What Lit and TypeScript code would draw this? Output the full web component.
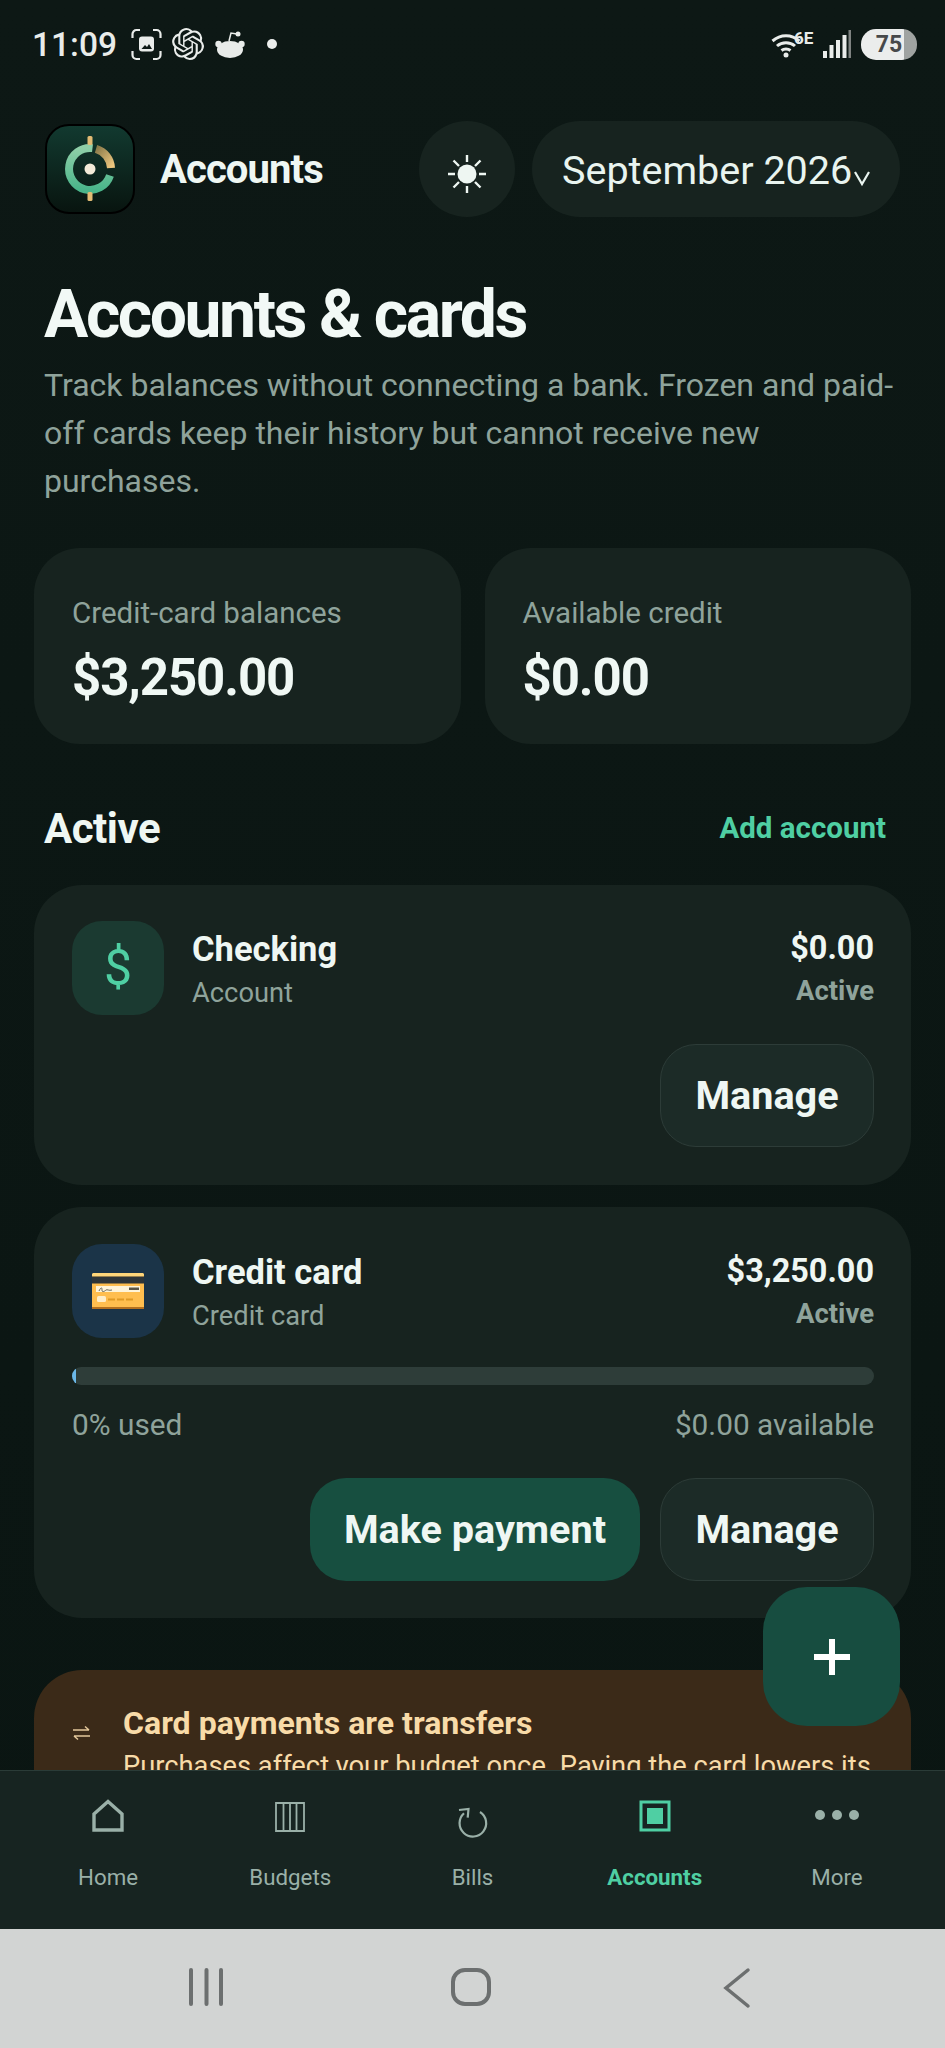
import { LitElement, html, css, svg } from 'lit';
import { customElement } from 'lit/decorators.js';

const sunIcon = svg`<circle cx="20" cy="20" r="9.5" fill="#eef6f2"/>
	<g stroke="#eef6f2" stroke-width="2.4" stroke-linecap="butt">
		<path d="M20 1v7M20 32v7M1 20h7M32 20h7M6.5 6.5l5.5 5.5M28 28l5.5 5.5M33.5 6.5L28 12M12 28l-5.5 5.5"/>
	</g>`;

const logo = svg`<defs>
		<linearGradient id="lg" x1="0" y1="0" x2="0" y2="1">
			<stop offset="0" stop-color="#123a30"/><stop offset="1" stop-color="#08140f"/>
		</linearGradient>
		<linearGradient id="ring" x1="0" y1="0" x2="0" y2="1">
			<stop offset="0" stop-color="#8fcfa8"/><stop offset="1" stop-color="#49b58a"/>
		</linearGradient>
		<linearGradient id="gold" x1="0" y1="0" x2="1" y2="1">
			<stop offset="0" stop-color="#8a7a4a"/><stop offset="1" stop-color="#eec77f"/>
		</linearGradient>
	</defs>
	<rect x="1" y="1" width="88" height="88" rx="23" fill="url(#lg)" stroke="#000" stroke-width="2"/>
	<path d="M47.500 24.100A21 21 0 1 0 65 51.500" fill="none" stroke="url(#ring)" stroke-width="8"/>
	<path d="M51 24.900A21 21 0 0 1 66 44" fill="none" stroke="url(#gold)" stroke-width="8"/>
	<rect x="42.500" y="12" width="5" height="9" rx="1.500" fill="#e2bb74"/>
	<rect x="42.500" y="68" width="5" height="9" rx="1.500" fill="#e2bb74"/>
	<circle cx="45" cy="45" r="5.500" fill="#f3ead8"/>`;

const cardIcon = svg`<rect x="0" y="0" width="52" height="36" rx="2.500" fill="#ffbe4f"/>
	<rect x="0" y="0" width="52" height="3.500" rx="1.500" fill="#ffd67a"/>
	<rect x="0" y="3.500" width="52" height="7" fill="#2e3538"/>
	<rect x="4" y="13" width="44" height="6" fill="#fff4d8"/>
	<path d="M7 18c2-4 3-4 3-1s3 1 4 0 3 1 6 0" fill="none" stroke="#4a4a40" stroke-width="0.800"/>
	<rect x="37" y="14.500" width="10" height="2.500" fill="#5b5647"/>
	<rect x="5" y="23" width="9" height="6" rx="1.500" fill="#ffeec9"/>
	<path d="M16 26.500h7M25 26.500h7M34 26.500h7" stroke="#e09a25" stroke-width="2"/>
	<rect x="0" y="34" width="52" height="2" fill="#b4701f"/>`;

type Tab = { label: string; icon: unknown; active?: boolean };

const tabs: Tab[] = [
	{ label: 'Home', icon: svg`<path d="M16 2.500L30 15v16H2V15z" fill="none" stroke="currentColor" stroke-width="3.400"/>` },
	{ label: 'Budgets', icon: svg`<path d="M2 4h28v28H2zM9.500 4v28M16 4v28M22.500 4v28" fill="none" stroke="currentColor" stroke-width="1.800"/>` },
	{ label: 'Bills', icon: svg`<path d="M24 13A13.300 13.300 0 1 1 8 14.300" fill="none" stroke="currentColor" stroke-width="2.200"/><path d="M3 11l9.500-1 -.8 8.700" fill="none" stroke="currentColor" stroke-width="2.200"/>` },
	{ label: 'Accounts', active: true, icon: svg`<path d="M2 3h28v28H2z" fill="none" stroke="currentColor" stroke-width="3"/><rect x="8" y="9" width="16" height="16" fill="currentColor"/>` },
	{ label: 'More', icon: svg`<circle cx="-1" cy="16" r="5" fill="currentColor"/><circle cx="16" cy="16" r="5" fill="currentColor"/><circle cx="33" cy="16" r="5" fill="currentColor"/>` },
];

@customElement('app-root')
export class AppRoot extends LitElement {
	static styles = css`
		:host {
			display: flex;
			flex-direction: column;
			width: 945px;
			height: 2048px;
			overflow: hidden;
			background: linear-gradient(#0d1815, #0a1512);
			color: #eff7f3;
			font-family: Roboto, 'Noto Sans', sans-serif;
		}
		svg { display: block; overflow: visible; }

		/* status bar */
		.status {
			height: 68px;
			flex: none;
			display: flex;
			align-items: center;
			padding: 20px 28px 0 32px;
			box-sizing: border-box;
		}
		.time { font-size: 33.500px; font-weight: 500; color: #e9ecea; width: 99px; }
		.status-icons { display: flex; align-items: center; gap: 10px; }
		.dot { width: 10px; height: 10px; border-radius: 50%; background: #eceeed; margin-left: 21px; }
		.status-right { margin-left: auto; display: flex; align-items: center; }
		.sixe { font-size: 17px; font-weight: 700; color: #e9ecea; margin: -13px 6px 0 -7px; width: 21px; }
		.signal { margin-left: 1px; }
		.battery {
			width: 56px;
			height: 31px;
			margin-left: 9px;
			border-radius: 15px;
			overflow: hidden;
			background: linear-gradient(90deg, #ebedec 76%, #9fa3a1 76%);
			color: #47494a;
			font-size: 23px;
			font-weight: 700;
			line-height: 31px;
			text-align: center;
		}

		/* scrolling page */
		.page { flex: 1; min-height: 0; overflow: hidden; position: relative; }
		.top {
			display: flex;
			align-items: center;
			margin-top: 53px;
			padding: 0 45px;
		}
		.brand { font-size: 40px; font-weight: 700; letter-spacing: -0.900px; margin-left: 25px; }
		.theme {
			width: 96px;
			height: 96px;
			border-radius: 50%;
			background: #17231f;
			margin-left: auto;
			display: flex;
			align-items: center;
			justify-content: center;
		}
		.theme svg { margin-top: 10px; }
		.month {
			width: 368px;
			height: 96px;
			box-sizing: border-box;
			margin-left: 17px;
			padding: 3px 0 0 30px;
			border-radius: 48px;
			background: #17231f;
			display: flex;
			align-items: center;
			font-size: 39.500px;
			color: #e9f4ef;
		}
		.month svg { margin: 14px 0 0 2px; }
		h1 {
			margin: 60px 0 0;
			padding-left: 44px;
			font-size: 66px;
			line-height: 76px;
			font-weight: 700;
			letter-spacing: -2.450px;
			color: #f2f9f6;
		}
		.lede {
			margin: 8px 0 0;
			padding: 0 44px;
			font-size: 32px;
			line-height: 48px;
			color: #8fa39b;
		}
		.stats {
			display: grid;
			grid-template-columns: 1fr 1fr;
			gap: 24px;
			margin: 43px 34px 0;
		}
		.stat {
			height: 196px;
			box-sizing: border-box;
			padding: 47px 38px 0;
			border-radius: 46px;
			background: #17231f;
		}
		.stat-label { font-size: 29.500px; line-height: 36px; color: #8fa39b; }
		.stat-value { font-size: 51px; line-height: 58px; font-weight: 700; letter-spacing: -1.100px; margin-top: 18px; color: #f0f8f4; }
		.section {
			display: flex;
			justify-content: space-between;
			align-items: center;
			height: 48px;
			margin-top: 60px;
			padding: 0 59px 0 44px;
		}
		.section h2 { margin: 0; font-size: 42px; font-weight: 700; letter-spacing: -0.500px; }
		.add { font-size: 29.500px; font-weight: 700; color: #4fcfa3; }

		/* account cards */
		.cards { display: flex; flex-direction: column; gap: 22px; margin: 33px 34px 0; }
		.card { padding: 36px 37px 38px 38px; border-radius: 48px; background: #17231f; }
		.card.wide { padding: 37px 37px 37px 38px; }
		.row { display: flex; align-items: flex-start; }
		.badge {
			width: 92px;
			height: 94px;
			flex: none;
			border-radius: 30px;
			display: flex;
			align-items: center;
			justify-content: center;
		}
		.badge.green { background: #1b3a31; color: #4fcfa3; font-size: 50px; }
		.badge.blue { background: #1b3448; }
		.names { margin-left: 28px; flex: 1; }
		.name { font-size: 34.500px; line-height: 42px; font-weight: 700; margin-top: 7px; color: #eff7f3; }
		.sub { font-size: 27.300px; line-height: 38px; margin-top: 4px; color: #8fa39b; }
		.amounts { text-align: right; }
		.amount { font-size: 32.400px; line-height: 40px; font-weight: 700; margin-top: 7px; color: #eff7f3; }
		.state { font-size: 27.500px; line-height: 36px; font-weight: 700; margin-top: 5px; color: #8fa39b; }
		.track { height: 18px; margin-top: 29px; border-radius: 9px; background: #2e3d39; overflow: hidden; }
		.fill { height: 100%; width: 4px; background: #6bb8e8; }
		.usage {
			display: flex;
			justify-content: space-between;
			margin-top: 21px;
			font-size: 29.800px;
			line-height: 38px;
			color: #8fa39b;
		}
		.actions { display: flex; justify-content: flex-end; gap: 20px; margin-top: 29px; }
		.usage + .actions { margin-top: 34px; }
		.btn {
			height: 103px;
			box-sizing: border-box;
			border-radius: 36px;
			display: flex;
			align-items: center;
			justify-content: center;
			font-size: 39.600px;
			font-weight: 700;
			color: #eff7f3;
		}
		.btn.ghost { width: 214px; background: #1c2b27; border: 1px solid #2d3c38; }
		.btn.solid { width: 330px; background: #174f40; }

		/* note, cut off by the tab bar */
		.note {
			display: flex;
			margin: 52px 34px 0;
			padding: 32px 38px 32px 39px;
			border-radius: 48px 48px 0 0;
			background: #3b2a18;
			color: #f8dba8;
		}
		.note-icon { flex: none; width: 50px; margin-top: 24px; }
		.note-title { font-size: 32.100px; line-height: 42px; font-weight: 700; }
		.note-text { font-size: 27.300px; line-height: 40px; margin-top: 2px; }

		.fab {
			position: absolute;
			left: 763px;
			top: 1519px;
			width: 137px;
			height: 139px;
			border-radius: 44px;
			background: #174d40;
			display: flex;
			align-items: center;
			justify-content: center;
		}

		/* tab bar */
		.tabs {
			flex: none;
			height: 159px;
			box-sizing: border-box;
			padding: 0 17px;
			display: grid;
			grid-template-columns: repeat(5, 1fr);
			background: #172421;
			border-top: 1px solid #2a3b37;
		}
		.tab {
			display: flex;
			flex-direction: column;
			align-items: center;
			padding-top: 28px;
			color: #9ab0a8;
			font-size: 22.300px;
		}
		.tab.active { color: #4fcfa3; font-weight: 700; }
		.tab span { margin-top: 29px; line-height: 30px; }

		/* system navigation */
		.sys {
			flex: none;
			height: 119px;
			background: #d2d4d3;
			display: flex;
			align-items: flex-start;
			padding: 39px 0 0 188px;
			box-sizing: border-box;
		}
		.sys .home { margin: 0 233px 0 227px; }
	`;

	render() {
		return html`
			<div class="status">
				<div class="time">11:09</div>
				<div class="status-icons">
					<svg width="31" height="31" viewBox="0 0 31 31">
						<path d="M1.500 9V5a4 4 0 0 1 4-4H9M22 1h3.500a4 4 0 0 1 4 4v4M29.500 22v4a4 4 0 0 1-4 4H22M9 30H5.500a4 4 0 0 1-4-4v-4" fill="none" stroke="#e9ecea" stroke-width="2.200"/>
						<rect x="8" y="7.500" width="15" height="15" rx="3" fill="#e9ecea"/>
						<path d="M10.500 20l3.500-4 2 2 2-3 3 5z" fill="#0d1815"/>
					</svg>
					<svg width="32" height="32" viewBox="0 0 24 24">
						<path fill="#e9ecea" d="M22.2819 9.8211a5.9847 5.9847 0 0 0-.5157-4.9108 6.0462 6.0462 0 0 0-6.5098-2.9A6.0651 6.0651 0 0 0 4.9807 4.1818a5.9847 5.9847 0 0 0-3.9977 2.9 6.0462 6.0462 0 0 0 .7427 7.0966 5.98 5.98 0 0 0 .511 4.9107 6.051 6.051 0 0 0 6.5146 2.9001A5.9847 5.9847 0 0 0 13.2599 24a6.0557 6.0557 0 0 0 5.7718-4.2058 5.9894 5.9894 0 0 0 3.9977-2.9001 6.0557 6.0557 0 0 0-.7475-7.0729zm-9.022 12.6081a4.4755 4.4755 0 0 1-2.8764-1.0408l.1419-.0804 4.7783-2.7582a.7948.7948 0 0 0 .3927-.6813v-6.7369l2.02 1.1686a.071.071 0 0 1 .038.052v5.5826a4.504 4.504 0 0 1-4.4945 4.4944zm-9.6607-4.1254a4.4708 4.4708 0 0 1-.5346-3.0137l.142.0852 4.783 2.7582a.7712.7712 0 0 0 .7806 0l5.8428-3.3685v2.3324a.0804.0804 0 0 1-.0332.0615L9.74 19.9502a4.4992 4.4992 0 0 1-6.1408-1.6464zM2.3408 7.8956a4.485 4.485 0 0 1 2.3655-1.9728V11.6a.7664.7664 0 0 0 .3879.6765l5.8144 3.3543-2.0201 1.1685a.0757.0757 0 0 1-.071 0l-4.8303-2.7865A4.504 4.504 0 0 1 2.3408 7.872zm16.5963 3.8558L13.1038 8.364 15.1192 7.2a.0757.0757 0 0 1 .071 0l4.8303 2.7913a4.4944 4.4944 0 0 1-.6765 8.1042v-5.6772a.79.79 0 0 0-.407-.667zm2.0107-3.0231l-.142-.0852-4.7735-2.7818a.7759.7759 0 0 0-.7854 0L9.409 9.2297V6.8974a.0662.0662 0 0 1 .0284-.0615l4.8303-2.7866a4.4992 4.4992 0 0 1 6.6802 4.66zM8.3065 12.863l-2.02-1.1638a.0804.0804 0 0 1-.038-.0567V6.0742a4.4992 4.4992 0 0 1 7.3757-3.4537l-.142.0805L8.704 5.459a.7948.7948 0 0 0-.3927.6813zm1.0976-2.3654l2.602-1.4998 2.6069 1.4998v2.9994l-2.5974 1.4997-2.6067-1.4997Z"/>
					</svg>
					<svg width="32" height="30" viewBox="0 0 32 30">
						<ellipse cx="16" cy="20.500" rx="13" ry="8.500" fill="#e9ecea"/>
						<circle cx="4.500" cy="15" r="3.200" fill="#e9ecea"/>
						<circle cx="27.500" cy="15" r="3.200" fill="#e9ecea"/>
						<path d="M15 12l2-8 6 1" fill="none" stroke="#e9ecea" stroke-width="1.500"/>
						<circle cx="24" cy="5" r="2.500" fill="#e9ecea"/>
					</svg>
				</div>
				<div class="dot"></div>
				<div class="status-right">
					<svg width="30" height="28" viewBox="0 0 30 28" fill="none" stroke="#e9ecea" stroke-width="3">
						<path d="M1.500 11c8-7 19-7 27 0M6 16c5-4.500 13-4.500 18 0M10.500 20.500c2.500-2 6.500-2 9 0"/>
						<circle cx="15" cy="25" r="2.500" fill="#e9ecea" stroke="none"/>
					</svg>
					<div class="sixe">6E</div>
					<svg class="signal" width="30" height="30" viewBox="0 0 30 30">
						<path d="M1 22h4v7H1zM7.500 16h4v13h-4zM14 11h4v18h-4zM20.500 6h4v23h-4z" fill="#e9ecea"/>
						<rect x="26.500" y="1" width="2.500" height="28" fill="#7f8381"/>
					</svg>
					<div class="battery">75</div>
				</div>
			</div>

			<div class="page">
				<div class="top">
					<svg width="90" height="90" viewBox="0 0 90 90">${logo}</svg>
					<div class="brand">Accounts</div>
					<div class="theme"><svg width="40" height="40" viewBox="0 0 40 40">${sunIcon}</svg></div>
					<div class="month">
						September 2026
						<svg width="16" height="14" viewBox="0 0 16 14"><path d="M1 1l7 12 7-12" fill="none" stroke="#e9f4ef" stroke-width="2.200"/></svg>
					</div>
				</div>

				<h1>Accounts &amp; cards</h1>
				<p class="lede">Track balances without connecting a bank. Frozen and paid-off cards keep their history but cannot receive new purchases.</p>

				<div class="stats">
					<div class="stat">
						<div class="stat-label">Credit-card balances</div>
						<div class="stat-value">$3,250.00</div>
					</div>
					<div class="stat">
						<div class="stat-label">Available credit</div>
						<div class="stat-value">$0.00</div>
					</div>
				</div>

				<div class="section">
					<h2>Active</h2>
					<div class="add">Add account</div>
				</div>

				<div class="cards">
					<div class="card">
						<div class="row">
							<div class="badge green">$</div>
							<div class="names">
								<div class="name">Checking</div>
								<div class="sub">Account</div>
							</div>
							<div class="amounts">
								<div class="amount">$0.00</div>
								<div class="state">Active</div>
							</div>
						</div>
						<div class="actions"><div class="btn ghost">Manage</div></div>
					</div>

					<div class="card wide">
						<div class="row">
							<div class="badge blue"><svg width="52" height="36" viewBox="0 0 52 36">${cardIcon}</svg></div>
							<div class="names">
								<div class="name">Credit card</div>
								<div class="sub">Credit card</div>
							</div>
							<div class="amounts">
								<div class="amount">$3,250.00</div>
								<div class="state">Active</div>
							</div>
						</div>
						<div class="track"><div class="fill"></div></div>
						<div class="usage"><span>0% used</span><span>$0.00 available</span></div>
						<div class="actions">
							<div class="btn solid">Make payment</div>
							<div class="btn ghost">Manage</div>
						</div>
					</div>
				</div>

				<div class="note">
					<svg class="note-icon" width="50" height="14" viewBox="0 0 50 14" preserveAspectRatio="xMinYMid meet">
						<path d="M0 4h16M12 .5L16 4M17 10H1M5 13.500L1 10" fill="none" stroke="#e3c79a" stroke-width="1.500"/>
					</svg>
					<div>
						<div class="note-title">Card payments are transfers</div>
						<div class="note-text">Purchases affect your budget once. Paying the card lowers its</div>
					</div>
				</div>

				<div class="fab">
					<svg width="36" height="36" viewBox="0 0 36 36"><path d="M18 0v36M0 18h36" stroke="#fff" stroke-width="6"/></svg>
				</div>
			</div>

			<div class="tabs">
				${tabs.map(
					(t) => html`<div class="tab ${t.active ? 'active' : ''}">
						<svg width="32" height="34" viewBox="0 0 32 34">${t.icon}</svg>
						<span>${t.label}</span>
					</div>`
				)}
			</div>

			<div class="sys">
				<svg width="36" height="38" viewBox="0 0 36 38">
					<path d="M3 2v34M18.500 2v34M33 2v34" stroke="#6c6f6f" stroke-width="4" stroke-linecap="round"/>
				</svg>
				<svg class="home" width="40" height="38" viewBox="0 0 40 38">
					<rect x="2" y="2" width="36" height="34" rx="12" fill="none" stroke="#6c6f6f" stroke-width="4"/>
				</svg>
				<svg width="26" height="40" viewBox="0 0 26 40">
					<path d="M24 2L2 20l22 18" fill="none" stroke="#6c6f6f" stroke-width="3.500" stroke-linecap="round"/>
				</svg>
			</div>
		`;
	}
}
